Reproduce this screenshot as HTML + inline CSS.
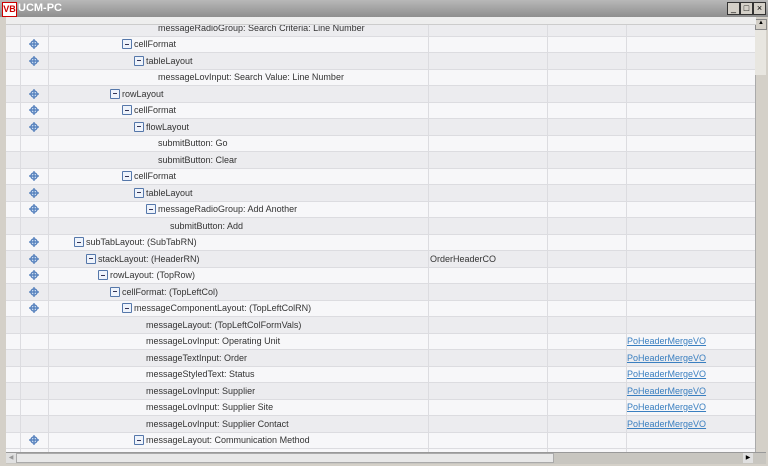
<!DOCTYPE html><html><head><style>
body{margin:0;width:768px;height:466px;overflow:hidden;background:#d4d0c8;font-family:"Liberation Sans",sans-serif;position:relative}
.title{position:absolute;left:0;top:0;width:768px;height:17px;background:linear-gradient(#b8b8b8,#8e8e8e);}
.title span{position:absolute;left:18px;top:2px;color:#fff;font-size:11px;font-weight:bold}
.logo{position:absolute;left:2px;top:2px;width:13px;height:13px;background:#fff;border:1px solid #c00;font-size:9px;font-weight:bold;color:#c00;line-height:13px;text-align:center}
.wb{position:absolute;top:2px;width:11px;height:11px;background:#d4d0c8;border:1px solid #333;font-size:9px;line-height:11px;text-align:center}
.tb{position:absolute;left:6px;top:17px;width:750px;height:7px;background:#eee;overflow:hidden;z-index:5;border-bottom:1px solid #ccc}
.grid{position:absolute;left:6px;top:19px;width:749px;height:433px;background:#f7f7f9;overflow:hidden}
.row{position:absolute;left:0;width:749px;height:16px;border-bottom:1px solid #dcdce0;font-size:9px;color:#333;line-height:16px}
.sh{background:#ececef}
.t{position:absolute;white-space:nowrap}
.m{position:absolute;top:3px;width:8px;height:8px;border:1px solid #5577aa;background:#eef3fb;border-radius:1px}
.m:after{content:"";position:absolute;left:2px;top:3.5px;width:4px;height:1px;background:#335}
.ic{position:absolute;left:23px;top:3px;width:10px;height:10px}
.vl{position:absolute;top:0;width:1px;height:433px;background:#dcdce0;z-index:2}
a{color:#3a7fc0;text-decoration:underline}
.vs{position:absolute;left:755px;top:19px;width:11px;height:433px;background:#e8e6e0}
.hs{position:absolute;left:6px;top:452px;width:760px;height:11px;background:#c8c6c0;border-top:1px solid #999}
</style></head><body>
<div class="title"><div class="logo">VB</div><span>UCM-PC</span>
<div class="wb" style="left:727px">_</div><div class="wb" style="left:740px">□</div><div class="wb" style="left:753px">×</div></div>
<div class="tb"></div>
<div class="grid">
<div class="vl" style="left:14px"></div><div class="vl" style="left:42px"></div><div class="vl" style="left:422px"></div><div class="vl" style="left:541px"></div><div class="vl" style="left:620px"></div>
<div id="rows"></div>
</div>
<div class="vs"><div style="position:absolute;left:0;top:0;width:10px;height:9px;background:#d4d0c8;border:1px solid #888;font-size:6px;text-align:center">▲</div><div style="position:absolute;left:0;top:56px;width:11px;height:377px;background:#d4d0c8;border-left:1px solid #aaa"></div></div>
<div class="hs"><div style="position:absolute;left:0;top:0;width:10px;height:10px;background:#e0e0e0;font-size:6px;color:#999;text-align:center;line-height:10px">◀</div><div style="position:absolute;left:10px;top:0;width:538px;height:10px;background:#e8e8e8;border:1px solid #aaa;box-sizing:border-box"></div><div style="position:absolute;left:737px;top:0;width:10px;height:10px;background:#e0e0e0;font-size:6px;text-align:center;line-height:10px">▶</div></div>
<script>
var R=[[0,0,152,"messageRadioGroup: Search Criteria: Line Number",1],
[1,116,0,"cellFormat"],[1,128,0,"tableLayout",1],[0,0,152,"messageLovInput: Search Value: Line Number"],
[1,104,0,"rowLayout",1],[1,116,0,"cellFormat"],[1,128,0,"flowLayout",1],[0,0,152,"submitButton: Go"],[0,0,152,"submitButton: Clear",1],
[1,116,0,"cellFormat"],[1,128,0,"tableLayout",1],[1,140,0,"messageRadioGroup: Add Another"],[0,0,164,"submitButton: Add",1],
[1,68,0,"subTabLayout: (SubTabRN)"],[1,80,0,"stackLayout: (HeaderRN)",1,"OrderHeaderCO"],[1,92,0,"rowLayout: (TopRow)"],
[1,104,0,"cellFormat: (TopLeftCol)",1],[1,116,0,"messageComponentLayout: (TopLeftColRN)"],[0,0,140,"messageLayout: (TopLeftColFormVals)",1],
[0,0,140,"messageLovInput: Operating Unit",0,0,1],[0,0,140,"messageTextInput: Order",1,0,1],[0,0,140,"messageStyledText: Status",0,0,1],
[0,0,140,"messageLovInput: Supplier",1,0,1],[0,0,140,"messageLovInput: Supplier Site",0,0,1],[0,0,140,"messageLovInput: Supplier Contact",1,0,1],
[1,128,0,"messageLayout: Communication Method"],[1,140,0,""]];
var ic='<svg class="ic" viewBox="0 0 10 10"><circle cx="5" cy="5" r="3.2" fill="#cfe0f4" stroke="#4a78b8" stroke-width="1.2"/><path d="M5 0v10M0 5h10" stroke="#4a78b8" stroke-width="1.2"/></svg>';
var h="";R.forEach(function(r,i){
var y=i===0?0.5:16.5*i+0.5;
h+='<div class="row'+(r[4]?' sh':'')+'" style="top:'+y+'px">';
if(r[0]){h+=ic+'<div class="m" style="left:'+r[1]+'px"></div><div class="t" style="left:'+(r[1]+12)+'px">'+r[3]+'</div>';}
else h+='<div class="t" style="left:'+r[2]+'px">'+r[3]+'</div>';
if(r[5])h+='<div class="t" style="left:424px">'+r[5]+'</div>';
if(r[6])h+='<div class="t" style="left:621px"><a>PoHeaderMergeVO</a></div>';
h+='</div>';});
document.getElementById("rows").innerHTML=h;
</script>
</body></html>
